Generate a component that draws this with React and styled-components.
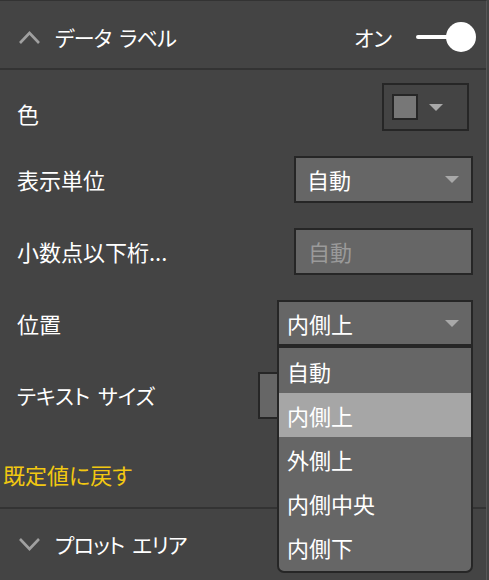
import React from "react";
import styled, { createGlobalStyle } from "styled-components";

const GlobalStyle = createGlobalStyle`
  html, body {
    margin: 0;
    padding: 0;
    background: #444444;
    overflow: hidden;
  }
  body {
    font-family: "Noto Sans CJK JP", "Noto Sans", sans-serif;
    font-feature-settings: "palt";
    color: #ffffff;
  }
`;

const Panel = styled.div`
  width: 487px;
  height: 580px;
  background: #444444;
  border-right: 1px solid #575757;
  border-top: 1px solid #333333;
  box-sizing: border-box;
`;

const SectionHeader = styled.div`
  display: flex;
  align-items: center;
  height: ${(props) => props.height}px;
  padding: ${(props) => props.pad}px 10px 0 18px;
  box-sizing: border-box;
`;

const Title = styled.span`
  font-size: 21px;
  letter-spacing: -0.8px;
  word-spacing: 4px;
  margin-left: 14px;
  flex: 1;
`;

const OnLabel = styled.span`
  font-size: 21px;
  margin-right: 24px;
`;

const Toggle = styled.div`
  position: relative;
  width: 60px;
  height: 30px;
  &::before {
    content: "";
    position: absolute;
    left: 0;
    top: 13px;
    width: 40px;
    height: 4px;
    border-radius: 2px;
    background: #ffffff;
  }
  &::after {
    content: "";
    position: absolute;
    left: 30px;
    top: 0;
    width: 30px;
    height: 30px;
    border-radius: 50%;
    background: #ffffff;
  }
`;

const Separator = styled.div`
  height: 2px;
  background: #333333;
`;

const Body = styled.div`
  padding: 1px 13px 0 17px;
`;

const Row = styled.div`
  position: relative;
  display: flex;
  align-items: center;
  justify-content: space-between;
  height: 72px;
`;

const Label = styled.span`
  font-size: ${(props) => props.size || 22}px;
  word-spacing: 3px;
  margin-top: ${(props) => props.shift || 0}px;
`;

const ColorBox = styled.div`
  display: flex;
  align-items: center;
  width: 87px;
  height: 48px;
  margin-right: 4px;
  border: 2px solid #262626;
  box-sizing: border-box;
  padding-left: 8px;
  gap: 11px;
`;

const Swatch = styled.div`
  width: 26px;
  height: 26px;
  box-sizing: border-box;
  border: 2px solid #262626;
  background: #777777;
`;

const Caret = styled.div`
  width: 0;
  height: 0;
  border-left: 7px solid transparent;
  border-right: 7px solid transparent;
  border-top: 7px solid #a8a8a8;
`;

const Field = styled.div`
  display: flex;
  align-items: center;
  justify-content: space-between;
  width: ${(props) => props.width}px;
  height: ${(props) => props.height || 47}px;
  box-sizing: border-box;
  border: 2px solid #262626;
  background: #666666;
  padding: 0 12px 0 ${(props) => props.padLeft || 11}px;
  font-size: 22px;
  color: ${(props) => (props.disabled ? "#9a9a9a" : "#ffffff")};
`;

const Menu = styled.div`
  position: absolute;
  top: 59px;
  right: 0;
  width: 196px;
  box-sizing: border-box;
  border: 2px solid #262626;
  border-radius: 0 0 7px 7px;
  background: #666666;
  padding: 1px 0 2px;
  z-index: 2;
`;

const MenuItem = styled.div`
  height: 44px;
  display: flex;
  align-items: center;
  padding-left: 8px;
  font-size: 22px;
  background: ${(props) => (props.active ? "#a6a6a6" : "transparent")};
`;

const ResetLink = styled.div`
  padding: 28px 0 18px 3px;
  margin-left: -17px;
  line-height: 30px;
  font-size: 22px;
  color: #f2c811;
`;

const Chevron = ({ up }) => (
  <svg width="23" height="15" viewBox="0 0 23 15">
    <polyline
      points={up ? "2,13 11.5,3 21,13" : "2,2 11.5,12 21,2"}
      fill="none"
      stroke="#a0a0a0"
      strokeWidth="2.6"
    />
  </svg>
);

const positions = ["自動", "内側上", "外側上", "内側中央", "内側下"];

export default function App() {
  return (
    <>
      <GlobalStyle />
      <Panel>
        <SectionHeader height={67} pad={5}>
          <Chevron up />
          <Title>データ ラベル</Title>
          <OnLabel>オン</OnLabel>
          <Toggle />
        </SectionHeader>
        <Separator />
        <Body>
          <Row>
            <Label shift={11}>色</Label>
            <ColorBox>
              <Swatch />
              <Caret />
            </ColorBox>
          </Row>
          <Row>
            <Label>表示単位</Label>
            <Field width={179}>
              自動
              <Caret />
            </Field>
          </Row>
          <Row>
            <Label>小数点以下桁...</Label>
            <Field width={179} disabled padLeft={12}>
              自動
            </Field>
          </Row>
          <Row>
            <Label>位置</Label>
            <Field width={196} height={46} padLeft={8}>
              内側上
              <Caret />
            </Field>
            <Menu>
              {positions.map((p) => (
                <MenuItem key={p} active={p === "内側上"}>
                  {p}
                </MenuItem>
              ))}
            </Menu>
          </Row>
          <Row>
            <Label size={21}>テキスト サイズ</Label>
            <Field width={215} />
          </Row>
          <ResetLink>既定値に戻す</ResetLink>
        </Body>
        <Separator />
        <SectionHeader height={70} pad={0}>
          <Chevron />
          <Title>プロット エリア</Title>
        </SectionHeader>
      </Panel>
    </>
  );
}
